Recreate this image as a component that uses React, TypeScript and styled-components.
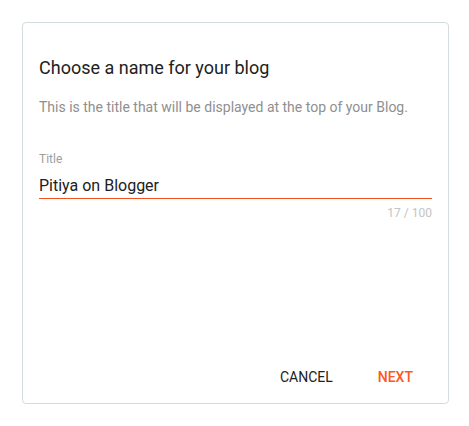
import styled, { createGlobalStyle } from 'styled-components'

const GlobalStyle = createGlobalStyle`
  html, body {
    margin: 0;
    padding: 0;
    background: #fff;
  }
  body {
    font-family: Roboto, "Liberation Sans", Arial, sans-serif;
  }
`

const Page = styled.div`
  padding: 22px 0 0 22px;
`

const Dialog = styled.div`
  box-sizing: border-box;
  width: 427px;
  height: 382px;
  border: 1px solid #d3dbde;
  border-radius: 4px;
  background: #fff;
  display: flex;
  flex-direction: column;
`

const Body = styled.div`
  padding: 33px 16px 0 16px;
  flex: 1;
`

const Heading = styled.h2`
  margin: 0;
  font-size: 18px;
  line-height: 24px;
  font-weight: 400;
  color: #212121;
`

const Description = styled.p`
  margin: 17px 0 0 0;
  font-size: 14px;
  line-height: 20px;
  color: #8f8f8f;
`

const Field = styled.div`
  margin-top: 34px;
  display: flex;
  flex-direction: column;
`

const Label = styled.label`
  font-size: 12px;
  line-height: 16px;
  color: #9e9e9e;
`

const Input = styled.input`
  box-sizing: border-box;
  margin-top: 6px;
  height: 26px;
  padding: 0 0 1px 0;
  border: none;
  border-bottom: 1px solid #f4511e;
  outline: none;
  font-family: inherit;
  font-size: 16px;
  line-height: 24px;
  color: #212121;
  background: transparent;
`

const Counter = styled.div`
  margin-top: 6px;
  text-align: right;
  font-size: 12px;
  line-height: 16px;
  color: #c4c4c4;
`

const Actions = styled.div`
  display: flex;
  justify-content: flex-end;
  gap: 13px;
  padding: 0 19px 8px 0;
`

const Button = styled.button<{ $primary?: boolean }>`
  height: 36px;
  padding: 0 16px;
  border: none;
  background: transparent;
  font-family: inherit;
  font-size: 14px;
  font-weight: ${p => (p.$primary ? 500 : 400)};
  text-transform: uppercase;
  color: ${p => (p.$primary ? '#ff5722' : '#212121')};
  cursor: pointer;
`

const App: React.FC = () => {
  const title = 'Pitiya on Blogger'
  return (
    <Page>
      <GlobalStyle />
      <Dialog>
        <Body>
          <Heading>Choose a name for your blog</Heading>
          <Description>This is the title that will be displayed at the top of your Blog.</Description>
          <Field>
            <Label>Title</Label>
            <Input defaultValue={title} />
            <Counter>{title.length} / 100</Counter>
          </Field>
        </Body>
        <Actions>
          <Button>Cancel</Button>
          <Button $primary>Next</Button>
        </Actions>
      </Dialog>
    </Page>
  )
}

export default App
